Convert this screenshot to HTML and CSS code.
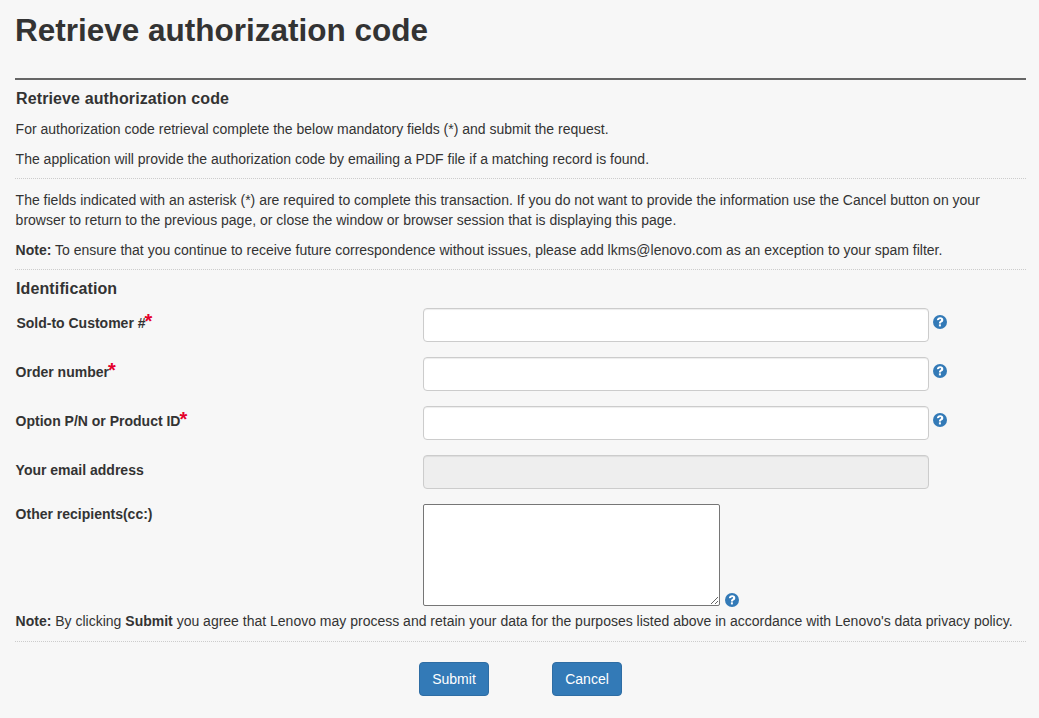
FILE: index.html
```html
<!DOCTYPE html>
<html lang="en">
<head>
  <meta charset="UTF-8">
  <title>Retrieve authorization code</title>
  <link rel="stylesheet" href="styles.css">
</head>
<body>

  <main class="page">
    <h1 class="page-title">Retrieve authorization code</h1>

    <h2 class="section-title first">Retrieve authorization code</h2>
    <p class="intro">For authorization code retrieval complete the below mandatory fields (*) and submit the request.</p>
    <p class="intro last">The application will provide the authorization code by emailing a PDF file if a matching record is found.</p>

    <p class="notice">The fields indicated with an asterisk (*) are required to complete this transaction. If you do not want to provide the information use the Cancel button on your browser to return to the previous page, or close the window or browser session that is displaying this page.</p>
    <p class="note top-note"><b>Note:</b> To ensure that you continue to receive future correspondence without issues, please add lkms@lenovo.com as an exception to your spam filter.</p>

    <h2 class="section-title second">Identification</h2>

    <form class="form">
      <div class="row">
        <label class="label nudge" for="customer">Sold-to Customer #<span class="req">*</span></label>
        <input class="input" id="customer" type="text">
        <svg class="help" viewBox="0 0 14 14"><use href="#help-icon"/></svg>
      </div>
      <div class="row">
        <label class="label" for="order">Order number<span class="req">*</span></label>
        <input class="input" id="order" type="text">
        <svg class="help" viewBox="0 0 14 14"><use href="#help-icon"/></svg>
      </div>
      <div class="row">
        <label class="label" for="option">Option P/N or Product ID<span class="req">*</span></label>
        <input class="input" id="option" type="text">
        <svg class="help" viewBox="0 0 14 14"><use href="#help-icon"/></svg>
      </div>
      <div class="row">
        <label class="label" for="email">Your email address</label>
        <input class="input" id="email" type="text" disabled>
      </div>
      <div class="row row-area">
        <label class="label" for="cc">Other recipients(cc:)</label>
        <textarea class="area" id="cc"></textarea>
        <svg class="help" viewBox="0 0 14 14"><use href="#help-icon"/></svg>
      </div>

      <p class="note form-note"><b>Note:</b> By clicking <b>Submit</b> you agree that Lenovo may process and retain your data for the purposes listed above in accordance with Lenovo's data privacy policy.</p>

      <div class="actions">
        <button class="btn" type="button">Submit</button>
        <button class="btn" type="button">Cancel</button>
      </div>
    </form>
  </main>

  <svg class="defs" width="0" height="0">
    <symbol id="help-icon" viewBox="0 0 14 14">
      <circle cx="7" cy="7" r="7" fill="#337ab7"/>
      <path d="M3.900 5.200C4 3.300 5.300 2.200 7.200 2.200c1.900 0 3.100 1.100 3.100 2.700 0 1.200-.6 1.800-1.500 2.400-.6.400-.9.700-.9 1.300H5.900c0-1.300.4-1.900 1.200-2.500.6-.4 1-.7 1-1.300 0-.5-.4-.8-.9-.8-.6 0-1 .400-1.100 1.100z" fill="#fff"/>
      <rect x="5.900" y="9.300" width="2" height="2.100" fill="#fff"/>
    </symbol>
  </svg>

</body>
</html>
```

FILE: styles.css
```css
* { box-sizing: border-box; margin: 0; padding: 0; }
body {
  background: #f7f7f7;
  color: #333;
  font-family: "Liberation Sans", Arial, sans-serif;
  font-size: 14px;
  line-height: 20px;
}
.defs { position: absolute; }

.page {
  padding: 0 13px 0 15px;
}
.page-title {
  font-size: 31.5px;
  line-height: 36px;
  padding: 12px 0 30px 0;
  border-bottom: 2px solid #666;
}
.section-title {
  font-size: 16px;
  line-height: 20px;
  letter-spacing: .12px;
  padding-left: 1px;
}
.section-title.first { margin-top: 9px; }
.section-title.second { margin-top: 9px; }

.intro {
  padding-left: .6px;
  margin-top: 10px;
}
.intro.last {
  padding-bottom: 9px;
  border-bottom: 1px dotted #ccc;
}
.notice {
  padding-left: .6px;
  margin-top: 11px;
}
.note {
  padding-left: .6px;
  margin-top: 10px;
}
.top-note,
.form-note {
  border-bottom: 1px dotted #ccc;
}
.top-note { padding-bottom: 9px; }
.form-note { margin-top: 5px; padding-bottom: 10px; }

.form { margin-top: 9px; }
.row {
  display: flex;
  align-items: flex-start;
  margin-bottom: 15px;
}
.label {
  width: 408px;
  padding: 5px 0 0 .6px;
  font-weight: bold;
  flex-shrink: 0;
}
.label.nudge { padding-left: 1.4px; }
.req {
  color: #e4002b;
  font-size: 20px;
  line-height: 10px;
  margin-left: -1px;
}
.input {
  width: 506px;
  height: 34px;
  background: #fff;
  border: 1px solid #ccc;
  border-radius: 4px;
  box-shadow: inset 0 1px 1px rgba(0,0,0,.075);
}
.input:disabled { background: #eee; }
.help {
  width: 14px;
  height: 14px;
  margin: 7px 0 0 4px;
}
.row-area { margin-bottom: 0; align-items: flex-end; }
.row-area .label { align-self: flex-start; padding-top: 0; }
.area {
  display: block;
  width: 297px;
  height: 102px;
  background: #fff;
  border: 1px solid #767676;
  border-radius: 2px;
}
.row-area .help { margin: 0 0 -1px 5px; }

.actions {
  display: flex;
  gap: 63px;
  margin-top: 20px;
  padding-left: 404px;
}
.btn {
  width: 70px;
  height: 34px;
  background: #337ab7;
  color: #fff;
  border: 1px solid #2e6da4;
  border-radius: 4px;
  font: inherit;
}
```
